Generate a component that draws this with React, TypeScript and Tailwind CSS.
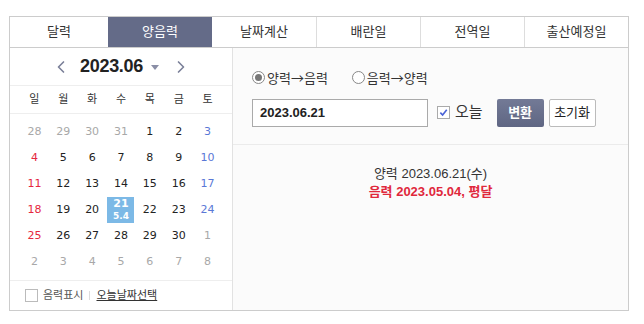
import { ChevronLeft, ChevronRight } from "lucide-react";

const tabs = ["달력", "양음력", "날짜계산", "배란일", "전역일", "출산예정일"];
const weekdays = ["일", "월", "화", "수", "목", "금", "토"];

type Day = { n: number; muted?: boolean };

const days: Day[] = [
  { n: 28, muted: true },
  { n: 29, muted: true },
  { n: 30, muted: true },
  { n: 31, muted: true },
  ...Array.from({ length: 30 }, (_, i) => ({ n: i + 1 })),
  ...Array.from({ length: 8 }, (_, i) => ({ n: i + 1, muted: true })),
];

const font = "font-['Liberation_Sans','Noto_Sans_CJK_KR',sans-serif]";

const dayColor = (d: Day, col: number) => {
  if (d.muted) return "text-[#a8a8a8]";
  if (col === 0) return "text-[#e5283e]";
  if (col === 6) return "text-[#5a78d6]";
  return "text-[#222222]";
};

const App = () => {
  return (
    <div className={`pt-4 pl-[9px] ${font}`}>
      <div className="w-[620px] border border-[#cccccc]">
        <div className="grid h-[31px] grid-cols-[98px_repeat(5,1fr)] border-b border-[#cccccc]">
          {tabs.map((t, i) => (
            <div
              key={t}
              className={`flex items-center justify-center text-[13px] ${
                i === 1 ? "bg-[#646b88] text-white" : "text-[#333333]"
              } ${i > 2 ? "border-l border-[#dddddd]" : ""}`}
            >
              {t}
            </div>
          ))}
        </div>

        <div className="flex h-[262px]">
          {/* calendar */}
          <div className="flex w-[223px] flex-col border-r border-[#e2e2e2] bg-white">
            <div className="flex h-[38px] items-center justify-center border-b border-[#eeeeee]">
              <ChevronLeft className="h-5 w-5 text-[#7b8099]" strokeWidth={2} />
              <span className="ml-[9px] text-[18px] font-bold tracking-[-0.3px] text-[#222222]">
                2023.06
              </span>
              <span className="ml-[8px] mt-[2px] h-0 w-0 border-x-[4px] border-t-[5px] border-x-transparent border-t-[#8a8ea6]" />
              <ChevronRight className="ml-[12px] h-5 w-5 text-[#7b8099]" strokeWidth={2} />
            </div>
            <div className="grid h-[28px] grid-cols-7 items-center border-b border-[#eeeeee] px-[10px] text-[11px] text-[#333333]">
              {weekdays.map((w) => (
                <div key={w} className="text-center">
                  {w}
                </div>
              ))}
            </div>
            <div className="grid flex-1 grid-cols-7 content-start px-[10px] py-[5px] font-['DejaVu_Sans',sans-serif] text-[11px]">
              {days.map((d, i) => {
                const col = i % 7;
                if (!d.muted && d.n === 21) {
                  return (
                    <div key={i} className="flex h-[26px] justify-center">
                      <div className="flex w-[27px] flex-col items-center bg-[#7cb9e6] pt-[1px] leading-[12px] text-white">
                        <span className="font-bold">21</span>
                        <span className="text-[9px] font-bold">5.4</span>
                      </div>
                    </div>
                  );
                }
                return (
                  <div
                    key={i}
                    className={`flex h-[26px] items-center justify-center ${dayColor(d, col)}`}
                  >
                    {d.n}
                  </div>
                );
              })}
            </div>
            <div className="flex h-[30px] items-center border-t border-[#eeeeee] pl-[15px] text-[11px]">
              <span className="h-[13px] w-[13px] border border-[#bbbbbb] bg-white" />
              <span className="ml-[5px] text-[#555555]">음력표시</span>
              <span className="mx-[6px] h-[9px] w-px bg-[#dddddd]" />
              <span className="text-[#333333] underline">오늘날짜선택</span>
            </div>
          </div>

          {/* converter */}
          <div className="flex flex-1 flex-col bg-[#fbfbfb]">
            <div className="border-b border-[#ebebeb] px-[19px] pb-[17px] pt-[20px]">
              <div className="flex items-center font-['Noto_Sans_CJK_KR',sans-serif] text-[13px] text-[#333333]">
                <span className="flex h-[13px] w-[13px] items-center justify-center rounded-full border border-[#888888] bg-white">
                  <span className="h-[7px] w-[7px] rounded-full bg-[#777777]" />
                </span>
                <span className="ml-[2px]">양력→음력</span>
                <span className="ml-[24px] h-[13px] w-[13px] rounded-full border border-[#888888] bg-white" />
                <span className="ml-[2px]">음력→양력</span>
              </div>
              <div className="mt-[11px] flex items-center">
                <div className="flex h-[28px] w-[176px] items-center border border-[#aaaaaa] bg-white pl-[7px] text-[13px] font-bold text-[#222222]">
                  2023.06.21
                </div>
                <span className="ml-[9px] flex h-[13px] w-[13px] items-center justify-center border border-[#aaaaaa] bg-white">
                  <svg viewBox="0 0 10 10" className="h-[9px] w-[9px]">
                    <path d="M1.5 5.2 L4 7.8 L8.6 2" fill="none" stroke="#4a63d6" strokeWidth="1.8" />
                  </svg>
                </span>
                <span className="ml-[5px] text-[15px] text-[#333333]">오늘</span>
                <button className="ml-[14px] h-[28px] w-[47px] rounded-[2px] bg-gradient-to-b from-[#737a96] to-[#5f6683] text-[13px] font-bold text-white">
                  변환
                </button>
                <button className="ml-[5px] h-[28px] w-[47px] rounded-[2px] border border-[#bbbbbb] bg-white text-[13px] text-[#222222]">
                  초기화
                </button>
              </div>
            </div>
            <div className="flex flex-col items-center pt-[20px] text-[13px] leading-[18px]">
              <span className="text-[#333333]">양력 2023.06.21(수)</span>
              <span className="font-bold text-[#e0283c]">음력 2023.05.04, 평달</span>
            </div>
          </div>
        </div>
      </div>
    </div>
  );
};

export default App;
